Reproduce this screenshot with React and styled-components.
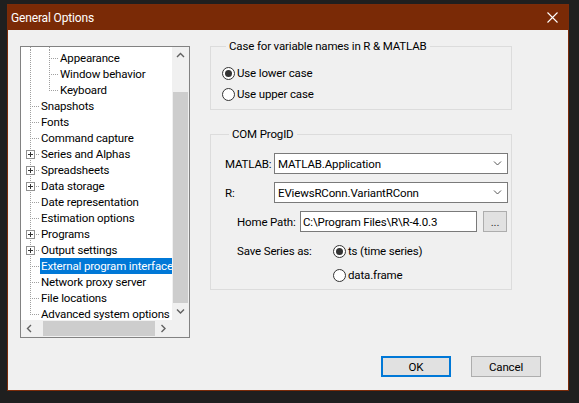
import styled, { createGlobalStyle } from "styled-components";

const FONT = `Roboto, "Noto Sans", "Liberation Sans", sans-serif`;

const GlobalStyle = createGlobalStyle`
  html, body {
    margin: 0;
    background: #1f1f1f;
  }
  body {
    font-family: ${FONT};
    font-size: 11.5px;
    letter-spacing: -0.15px;
    color: #000;
  }
`;

const Page = styled.div`
  padding: 4px 0 0 7px;
`;

const Window = styled.div`
  width: 562px;
  height: 387px;
  box-sizing: border-box;
  border: 1px solid #7b2b09;
  display: flex;
  flex-direction: column;
  background: #f0f0f0;
`;

const TitleBar = styled.div`
  height: 25px;
  flex: none;
  background: #7a2a06;
  color: #fff;
  display: flex;
  align-items: center;
  justify-content: space-between;
  padding: 0 10px 0 3px;
  font-size: 12px;
`;

const Client = styled.div`
  flex: 1;
  display: flex;
  flex-direction: column;
`;

const Main = styled.div`
  display: flex;
  align-items: flex-start;
  gap: 20px;
  padding: 8px 0 0 12px;
`;

/* ---------- tree ---------- */

const Tree = styled.div`
  margin-top: 8px;
  width: 170px;
  height: 292px;
  box-sizing: border-box;
  border: 1px solid #828282;
  background: #fff;
  display: grid;
  grid-template-columns: 1fr 17px;
  grid-template-rows: 1fr 17px;
`;

const TreeBody = styled.div`
  overflow: hidden;
`;

const TreeRow = styled.div`
  display: flex;
  height: ${(p) => p.$h || "16px"};
  align-items: center;
`;

const Cell = styled.span`
  position: relative;
  flex: none;
  width: 19px;
  height: 100%;
  &::before {
    content: "";
    display: ${(p) => (p.$v === "none" ? "none" : "block")};
    position: absolute;
    left: 9px;
    top: 0;
    width: 1px;
    height: ${(p) => (p.$v === "half" ? "9px" : "100%")};
    background-image: linear-gradient(#a0a0a0 50%, transparent 50%);
    background-size: 1px 2px;
  }
  &::after {
    content: "";
    display: ${(p) => (p.$h ? "block" : "none")};
    position: absolute;
    left: 10px;
    top: 8px;
    width: 8px;
    height: 1px;
    background-image: linear-gradient(90deg, transparent 50%, #a0a0a0 50%);
    background-size: 2px 1px;
  }
`;

const PlusBox = styled.span`
  position: absolute;
  left: 5px;
  top: 4px;
  width: 9px;
  height: 9px;
  box-sizing: border-box;
  border: 1px solid #919191;
  background: #fff;
  z-index: 1;
  &::before,
  &::after {
    content: "";
    position: absolute;
    background: #333;
  }
  &::before {
    left: 1px;
    top: 3px;
    width: 5px;
    height: 1px;
  }
  &::after {
    left: 3px;
    top: 1px;
    width: 1px;
    height: 5px;
  }
`;

const TreeLabel = styled.span`
  padding: 0 2px 0 1px;
  line-height: 16px;
  white-space: nowrap;
  background: ${(p) => (p.$selected ? "#0078d7" : "transparent")};
  color: ${(p) => (p.$selected ? "#fff" : "#000")};
`;

const VScroll = styled.div`
  background: #f0f0f0;
  display: flex;
  flex-direction: column;
`;

const HScroll = styled.div`
  background: #f0f0f0;
  display: flex;
`;

const Corner = styled.div`
  background: #f0f0f0;
`;

const ScrollBtn = styled.div`
  flex: none;
  width: 17px;
  height: 17px;
  display: flex;
  align-items: center;
  justify-content: center;
`;

const VTrack = styled.div`
  flex: 1;
  display: flex;
  flex-direction: column;
  padding-top: 28px;
`;

const HTrack = styled.div`
  flex: 1;
  display: flex;
  padding-left: 5px;
`;

const Thumb = styled.div`
  flex: 1;
  background: #cdcdcd;
  margin: ${(p) => (p.$horizontal ? "1px 0" : "0 1px")};
`;

/* ---------- right side ---------- */

const Side = styled.div`
  width: 302px;
  display: flex;
  flex-direction: column;
  gap: 16px;
`;

const Group = styled.fieldset`
  margin: 0;
  min-width: 0;
  border: 1px solid #dcdcdc;
  padding: ${(p) => p.$pad};
`;

const Legend = styled.legend`
  margin-left: 4px;
  padding: 0 3px;
  line-height: 16px;
`;

const RadioList = styled.div`
  display: flex;
  flex-direction: column;
  gap: ${(p) => p.$gap || "1px"};
`;

const RadioRow = styled.label`
  display: flex;
  align-items: center;
  gap: 2px;
  height: 20px;
`;

const RadioCircle = styled.span`
  width: 13px;
  height: 13px;
  box-sizing: border-box;
  border: 1px solid #333;
  border-radius: 50%;
  background: #fff;
  display: flex;
  align-items: center;
  justify-content: center;
  &::after {
    content: "";
    display: ${(p) => (p.$checked ? "block" : "none")};
    width: 7px;
    height: 7px;
    border-radius: 50%;
    background: #333;
  }
`;

const FormRow = styled.div`
  display: flex;
  align-items: ${(p) => p.$align || "center"};
  margin-top: ${(p) => p.$top || "0px"};
  padding-left: ${(p) => p.$indent || "0px"};
`;

const FieldLabel = styled.span`
  flex: none;
  width: ${(p) => p.$w};
  line-height: 20px;
`;

const Combo = styled.div`
  width: 234px;
  height: 21px;
  box-sizing: border-box;
  border: 1px solid #7a7a7a;
  background: #fff;
  display: flex;
  align-items: center;
  justify-content: space-between;
  padding: 0 5px 0 3px;
`;

const TextInput = styled.div`
  width: 177px;
  height: 21px;
  box-sizing: border-box;
  border: 1px solid #7a7a7a;
  background: #fff;
  display: flex;
  align-items: center;
  padding-left: 2px;
`;

const SmallButton = styled.div`
  margin-left: 6px;
  width: 24px;
  height: 21px;
  box-sizing: border-box;
  border: 1px solid #adadad;
  background: #e1e1e1;
  display: flex;
  align-items: center;
  justify-content: center;
  color: #333;
`;

const Footer = styled.div`
  margin-top: auto;
  display: flex;
  justify-content: flex-end;
  gap: 20px;
  padding: 0 27px 13px 0;
`;

const DialogButton = styled.button`
  width: 70px;
  height: 21px;
  box-sizing: border-box;
  padding: 0;
  font-family: ${FONT};
  font-size: 11.5px;
  letter-spacing: -0.15px;
  color: #000;
  background: #e1e1e1;
  border: 1px solid ${(p) => (p.$default ? "#0078d7" : "#adadad")};
  box-shadow: ${(p) => (p.$default ? "inset 0 0 0 1px #0078d7" : "none")};
`;

/* ---------- icons ---------- */

const Chevron = ({ dir, color = "#606060", width = 1.4 }) => {
  const paths = {
    up: "M1 5 L4.5 1.5 L8 5",
    down: "M1 1.5 L4.5 5 L8 1.5",
    left: "M5 1 L1.5 4.5 L5 8",
    right: "M1.5 1 L5 4.5 L1.5 8",
  };
  const horiz = dir === "left" || dir === "right";
  return (
    <svg
      width={horiz ? 6.5 : 9}
      height={horiz ? 9 : 6.5}
      viewBox={horiz ? "0 0 6.5 9" : "0 0 9 6.5"}
      style={{ display: "block" }}
    >
      <path d={paths[dir]} fill="none" stroke={color} strokeWidth={width} />
    </svg>
  );
};

const CloseIcon = () => (
  <svg width="11" height="11" viewBox="0 0 11 11" style={{ display: "block" }}>
    <path d="M0.5 0.5 L10.5 10.5 M10.5 0.5 L0.5 10.5" stroke="#fff" strokeWidth="1.1" />
  </svg>
);

/* ---------- data ---------- */

const treeItems = [
  { label: "Appearance", cells: [{ v: "full" }, { v: "full", h: true }] },
  { label: "Window behavior", cells: [{ v: "full" }, { v: "full", h: true }] },
  { label: "Keyboard", cells: [{ v: "full" }, { v: "half", h: true }] },
  { label: "Snapshots", cells: [{ v: "full", h: true }] },
  { label: "Fonts", cells: [{ v: "full", h: true }] },
  { label: "Command capture", cells: [{ v: "full", h: true }] },
  { label: "Series and Alphas", cells: [{ v: "full", h: true, plus: true }] },
  { label: "Spreadsheets", cells: [{ v: "full", h: true, plus: true }] },
  { label: "Data storage", cells: [{ v: "full", h: true, plus: true }] },
  { label: "Date representation", cells: [{ v: "full", h: true }] },
  { label: "Estimation options", cells: [{ v: "full", h: true }] },
  { label: "Programs", cells: [{ v: "full", h: true, plus: true }] },
  { label: "Output settings", cells: [{ v: "full", h: true, plus: true }] },
  { label: "External program interface", cells: [{ v: "full", h: true }], selected: true },
  { label: "Network proxy server", cells: [{ v: "full", h: true }] },
  { label: "File locations", cells: [{ v: "full", h: true }] },
  { label: "Advanced system options", cells: [{ v: "half", h: true }] },
];

function OptionsTree() {
  return (
    <Tree>
      <TreeBody>
        <TreeRow $h="3px">
          <Cell $v="full" />
          <Cell $v="full" />
        </TreeRow>
        {treeItems.map((item) => (
          <TreeRow key={item.label}>
            {item.cells.map((c, i) => (
              <Cell key={i} $v={c.v} $h={c.h}>
                {c.plus && <PlusBox />}
              </Cell>
            ))}
            <TreeLabel $selected={item.selected}>{item.label}</TreeLabel>
          </TreeRow>
        ))}
      </TreeBody>
      <VScroll>
        <ScrollBtn>
          <Chevron dir="up" />
        </ScrollBtn>
        <VTrack>
          <Thumb />
        </VTrack>
        <ScrollBtn>
          <Chevron dir="down" />
        </ScrollBtn>
      </VScroll>
      <HScroll>
        <ScrollBtn>
          <Chevron dir="left" />
        </ScrollBtn>
        <HTrack>
          <Thumb $horizontal />
        </HTrack>
        <ScrollBtn>
          <Chevron dir="right" />
        </ScrollBtn>
      </HScroll>
      <Corner />
    </Tree>
  );
}

function Radio({ checked, children }) {
  return (
    <RadioRow>
      <RadioCircle $checked={checked} />
      <span>{children}</span>
    </RadioRow>
  );
}

export default function App() {
  return (
    <>
      <GlobalStyle />
      <Page>
        <Window>
          <TitleBar>
            <span>General Options</span>
            <CloseIcon />
          </TitleBar>
          <Client>
            <Main>
              <OptionsTree />
              <Side>
                <Group $pad="9px 0 5px 11px">
                  <Legend>Case for variable names in R &amp; MATLAB</Legend>
                  <RadioList>
                    <Radio checked>Use lower case</Radio>
                    <Radio>Use upper case</Radio>
                  </RadioList>
                </Group>
                <Group $pad="11px 0 4px 14px">
                  <Legend>COM ProgID</Legend>
                  <FormRow>
                    <FieldLabel $w="49px">MATLAB:</FieldLabel>
                    <Combo>
                      <span>MATLAB.Application</span>
                      <Chevron dir="down" color="#555" width={1} />
                    </Combo>
                  </FormRow>
                  <FormRow $top="8px">
                    <FieldLabel $w="49px">R:</FieldLabel>
                    <Combo>
                      <span>EViewsRConn.VariantRConn</span>
                      <Chevron dir="down" color="#555" width={1} />
                    </Combo>
                  </FormRow>
                  <FormRow $top="8px" $indent="12px">
                    <FieldLabel $w="63px">Home Path:</FieldLabel>
                    <TextInput>C:\Program Files\R\R-4.0.3</TextInput>
                    <SmallButton>...</SmallButton>
                  </FormRow>
                  <FormRow $top="9px" $indent="12px" $align="flex-start">
                    <FieldLabel $w="96px">Save Series as:</FieldLabel>
                    <RadioList $gap="4px">
                      <Radio checked>ts (time series)</Radio>
                      <Radio>data.frame</Radio>
                    </RadioList>
                  </FormRow>
                </Group>
              </Side>
            </Main>
            <Footer>
              <DialogButton $default>OK</DialogButton>
              <DialogButton>Cancel</DialogButton>
            </Footer>
          </Client>
        </Window>
      </Page>
    </>
  );
}
